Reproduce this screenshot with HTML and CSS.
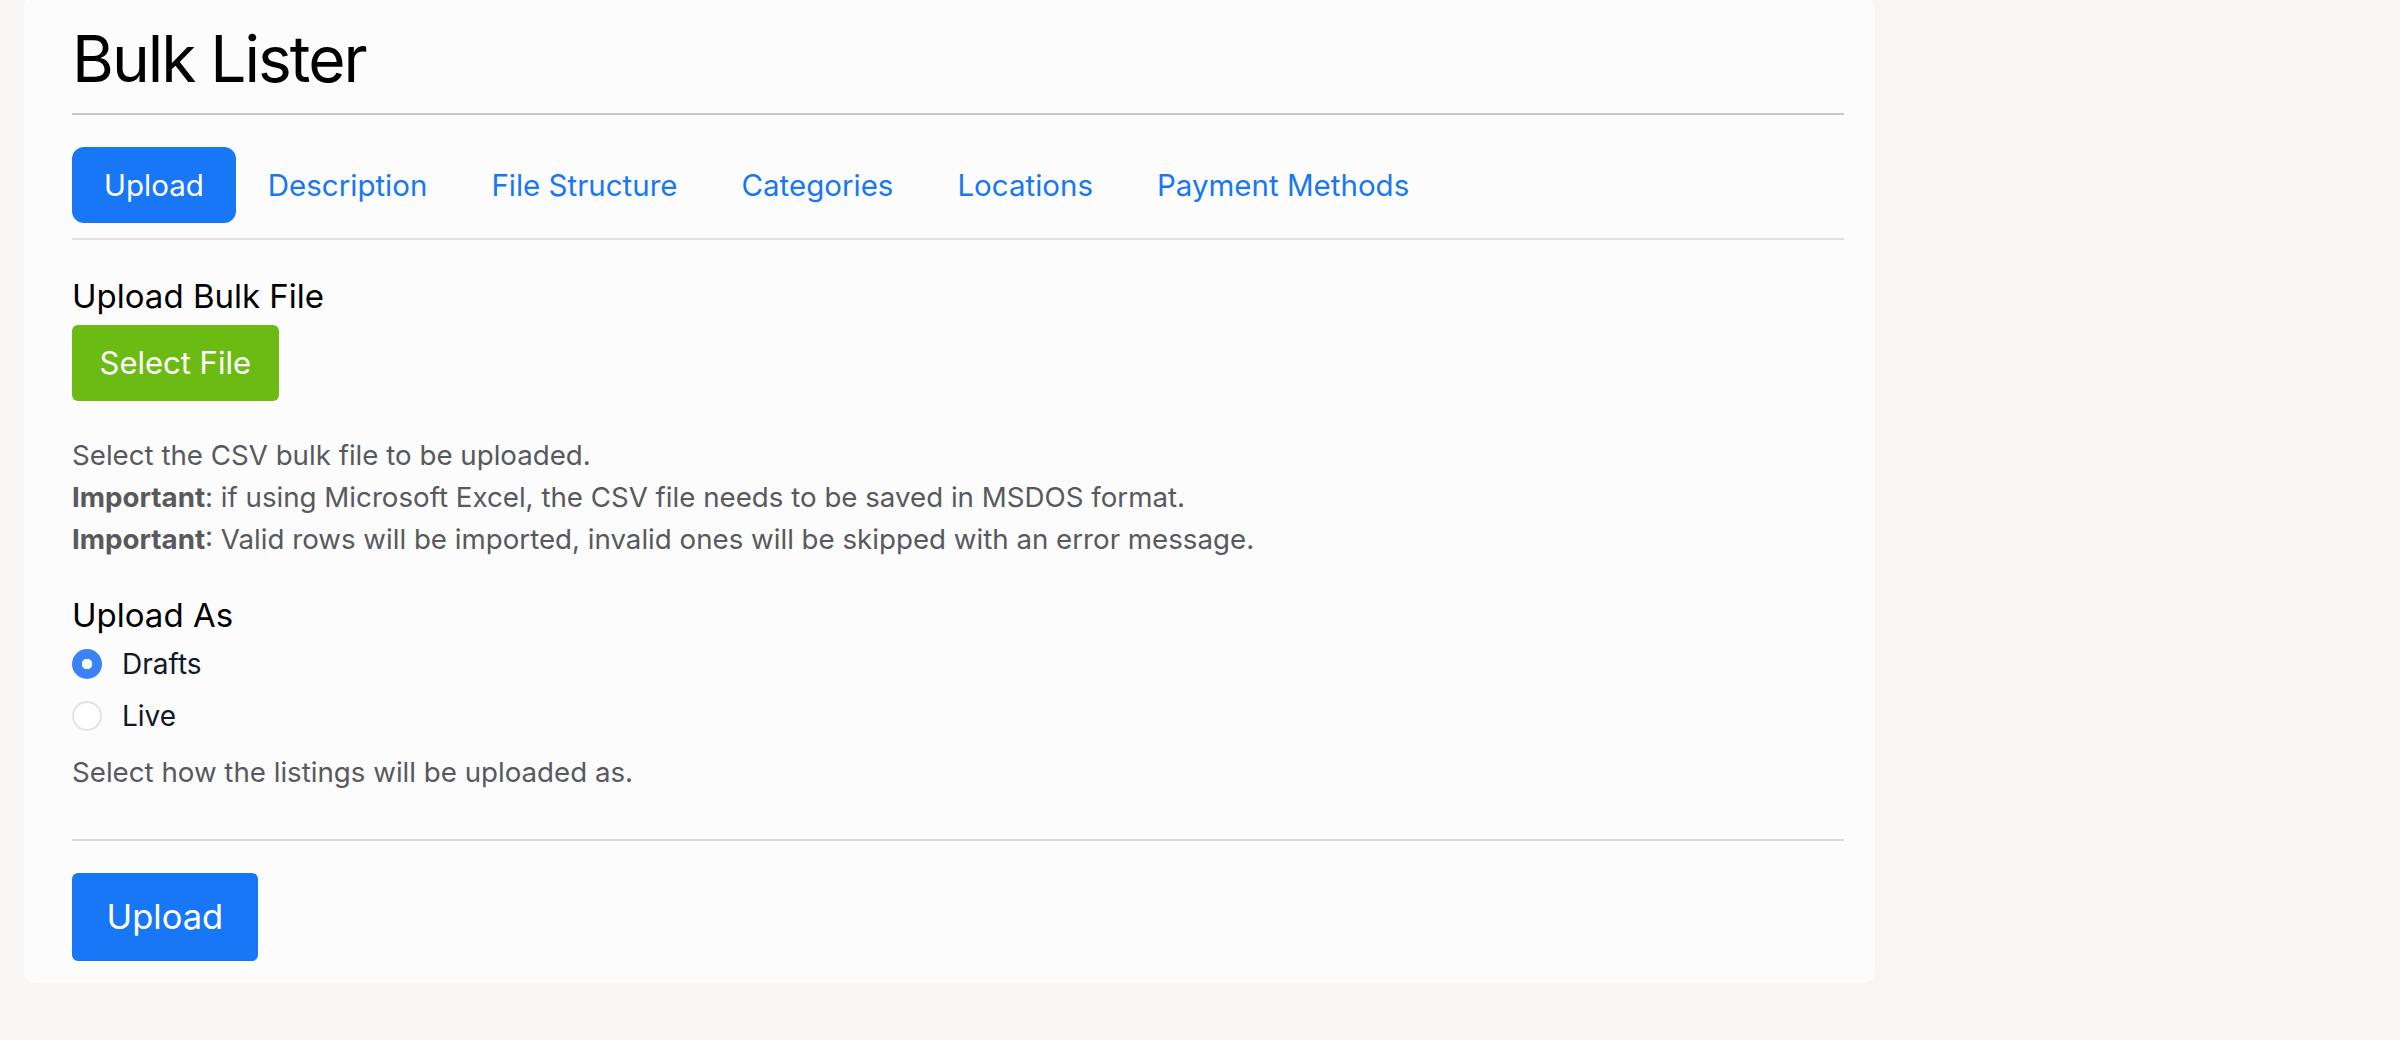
FILE: index.html
```html
<!DOCTYPE html>
<html lang="en">
<head>
    <meta charset="UTF-8">
    <title>Bulk Lister</title>
    <link rel="stylesheet" href="styles.css">
</head>
<body>
<div class="card">
    <div class="page-head">
        <h1>Bulk Lister</h1>
    </div>

    <ul class="tabs">
        <li><a class="tab active">Upload</a></li>
        <li><a class="tab">Description</a></li>
        <li><a class="tab">File Structure</a></li>
        <li><a class="tab">Categories</a></li>
        <li><a class="tab">Locations</a></li>
        <li><a class="tab">Payment Methods</a></li>
    </ul>

    <div class="field">
        <div class="field-label">Upload Bulk File</div>
        <button class="btn btn-green">Select File</button>
        <p class="help help-file">
            Select the CSV bulk file to be uploaded.<br>
            <b>Important</b>: if using Microsoft Excel, the CSV file needs to be saved in MSDOS format.<br>
            <b>Important</b>: Valid rows will be imported, invalid ones will be skipped with an error message.
        </p>
    </div>

    <div class="field field-as">
        <div class="field-label">Upload As</div>
        <label class="radio"><input type="radio" name="as" checked><span>Drafts</span></label>
        <label class="radio"><input type="radio" name="as"><span>Live</span></label>
        <p class="help">Select how the listings will be uploaded as.</p>
    </div>

    <div class="actions">
        <button class="btn btn-blue">Upload</button>
    </div>
</div>
</body>
</html>
```

FILE: styles.css
```css
*{margin: 0;padding: 0;box-sizing: border-box;}
body{background: #f7f6f4;font-family: Inter, "Noto Sans", sans-serif;color: #000;}

.card{width: 1851px;margin: -4px 0 0 24px;background: #fcfcfc;border-radius: 12px;padding: 24px 31px 22px 48px;}

.page-head{border-bottom: 2px solid #c8c8c8;padding-bottom: 15px;}
.page-head h1{font-size: 64px;font-weight: 400;line-height: 78px;letter-spacing: -2px;}

.tabs{display: flex;list-style: none;margin-top: 32px;padding-bottom: 15px;border-bottom: 2px solid #dee2e6;}
.tab{display: block;font-size: 29.5px;line-height: 46px;padding: 15px 32px;color: #1877f2;border-radius: 12px;cursor: pointer;}
.tab.active{background: #1877f7;color: #fff;}

.field{margin-top: 37px;}
.field-label{font-size: 33px;line-height: 38px;}

.btn{border: 0;border-radius: 6px;font-family: inherit;color: #fff;cursor: pointer;}
.btn-green{background: #6cbb14;font-size: 31px;line-height: 46px;padding: 15px 27.5px;margin-top: 10px;}
.btn-blue{background: #1877f7;font-size: 34.5px;line-height: 52px;padding: 18px 34.5px;}

.help{font-size: 27.7px;line-height: 42px;color: #58595e;}
.help b{font-weight: 700;}
.help-file{margin-top: 33px;}

.field-as{margin-top: 36px;}
.radio{display: flex;align-items: center;gap: 20px;height: 30px;margin-top: 15px;font-size: 28px;color: #111827;}
.radio + .radio{margin-top: 22px;}
.radio input{appearance: none;width: 30px;height: 30px;border-radius: 50%;border: 2px solid #e1e3e8;background: #fff;}
.radio input:checked{border: 0;background: radial-gradient(circle, #fff 0 5px, #3b82f6 5.5px);}
.field-as .help{margin-top: 20px;}

.actions{margin-top: 46px;padding-top: 32px;border-top: 2px solid #d8d8de;}
```
